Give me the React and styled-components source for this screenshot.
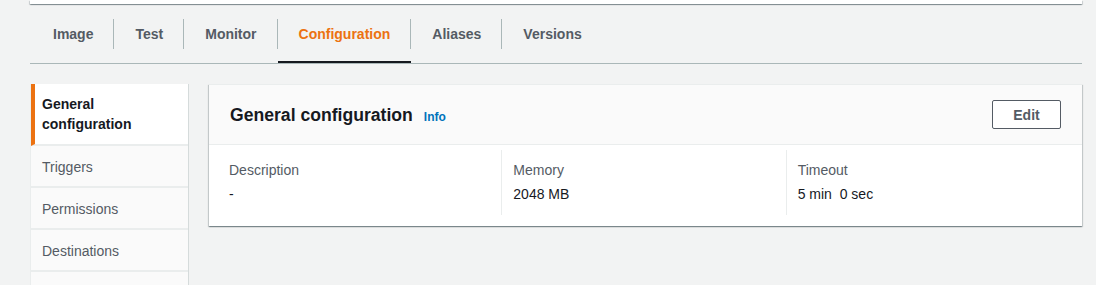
import React from 'react';
import styled, { createGlobalStyle } from 'styled-components';

const GlobalStyle = createGlobalStyle`
  html, body {
    margin: 0;
    padding: 0;
    background: #f2f3f3;
    font-family: "Liberation Sans", Arial, sans-serif;
    color: #16191f;
    -webkit-font-smoothing: antialiased;
  }
`;

const Page = styled.div`
  padding: 0 14px 0 30px;
  height: 285px;
  overflow: hidden;
`;

const TopPanel = styled.div`
  height: 4px;
  background: #ffffff;
  box-shadow: 0 1px 1px 0 rgba(0, 28, 36, 0.3), 1px 1px 1px 0 rgba(0, 28, 36, 0.15),
    -1px 1px 1px 0 rgba(0, 28, 36, 0.15);
`;

const TabList = styled.div`
  display: flex;
  padding-left: 2px;
  border-bottom: 1px solid #aab7b8;
`;

const Tab = styled.div`
  padding: 15px 0 12px;
  border-bottom: 2px solid ${p => (p.$active ? '#16191f' : 'transparent')};
`;

const TabLabel = styled.div`
  padding: 6px 20px 6px 21px;
  line-height: 18px;
  font-size: 14px;
  font-weight: 700;
  color: ${p => (p.$active ? '#ec7211' : '#545b64')};
  border-right: 1px solid ${p => (p.$last ? 'transparent' : '#aab7b8')};
`;

const Content = styled.div`
  display: flex;
  gap: 20px;
  margin-top: 20px;
  align-items: flex-start;
`;

const SideNav = styled.nav`
  width: 157px;
  flex-shrink: 0;
  background: #fafafa;
  border-left: 1px solid #eaeded;
  border-right: 1px solid #d5dbdb;
  min-height: 220px;
`;

const NavItem = styled.div`
  padding: ${p => (p.$active ? '10px' : '11px')} 10px ${p => (p.$active ? '10px' : '9px')}
    ${p => (p.$active ? '7px' : '11px')};
  border-left: ${p => (p.$active ? '4px solid #ec7211' : 'none')};
  background: ${p => (p.$active ? '#ffffff' : '#fafafa')};
  border-bottom: 2px solid #eaeded;
  font-size: 14px;
  line-height: 20px;
  font-weight: ${p => (p.$active ? 700 : 400)};
  color: ${p => (p.$active ? '#16191f' : '#545b64')};
`;

const Card = styled.section`
  flex: 1;
  background: #ffffff;
  border-top: 1px solid #eaeded;
  box-shadow: 0 1px 1px 0 rgba(0, 28, 36, 0.3), 1px 1px 1px 0 rgba(0, 28, 36, 0.15),
    -1px 1px 1px 0 rgba(0, 28, 36, 0.15);
`;

const CardHeader = styled.header`
  display: flex;
  align-items: center;
  justify-content: space-between;
  height: 59px;
  padding: 0 21px;
  background: #fafafa;
  border-bottom: 1px solid #eaeded;
`;

const TitleRow = styled.div`
  display: flex;
  align-items: baseline;
  gap: 11px;
  padding-top: 2px;
`;

const Title = styled.h2`
  margin: 0;
  font-size: 17.6px;
  font-weight: 700;
  color: #16191f;
`;

const InfoLink = styled.a`
  font-size: 12px;
  font-weight: 700;
  color: #0073bb;
  text-decoration: none;
`;

const Button = styled.button`
  height: 29px;
  width: 69px;
  border: 1px solid #545b64;
  border-radius: 2px;
  background: #ffffff;
  font-family: inherit;
  font-size: 14px;
  font-weight: 700;
  color: #545b64;
  cursor: pointer;
`;

const CardBody = styled.div`
  display: grid;
  grid-template-columns: repeat(3, 1fr);
  padding: 5px 12px 11px 8px;
`;

const Column = styled.div`
  padding: 10px 11px 11px;
  border-left: 1px solid ${p => (p.$first ? 'transparent' : '#eaeded')};
  display: flex;
  flex-direction: column;
  gap: 4px;
  font-size: 14px;
  line-height: 20px;
`;

const Label = styled.div`
  color: #545b64;
`;

const Value = styled.div`
  color: #16191f;
  white-space: pre;
`;

const tabs = ['Image', 'Test', 'Monitor', 'Configuration', 'Aliases', 'Versions'];
const navItems = ['General configuration', 'Triggers', 'Permissions', 'Destinations'];
const fields = [
  { label: 'Description', value: '-' },
  { label: 'Memory', value: '2048 MB' },
  { label: 'Timeout', value: '5 min  0 sec' },
];

export default function App() {
  return (
    <Page>
      <GlobalStyle />
      <TopPanel />
      <TabList>
        {tabs.map((t, i) => (
          <Tab key={t} $active={t === 'Configuration'}>
            <TabLabel $active={t === 'Configuration'} $last={i === tabs.length - 1}>
              {t}
            </TabLabel>
          </Tab>
        ))}
      </TabList>
      <Content>
        <SideNav>
          {navItems.map((n, i) => (
            <NavItem key={n} $active={i === 0}>
              {i === 0 ? (
                <>
                  General
                  <br />
                  configuration
                </>
              ) : (
                n
              )}
            </NavItem>
          ))}
        </SideNav>
        <Card>
          <CardHeader>
            <TitleRow>
              <Title>General configuration</Title>
              <InfoLink href="#">Info</InfoLink>
            </TitleRow>
            <Button>Edit</Button>
          </CardHeader>
          <CardBody>
            {fields.map((f, i) => (
              <Column key={f.label} $first={i === 0}>
                <Label>{f.label}</Label>
                <Value>{f.value}</Value>
              </Column>
            ))}
          </CardBody>
        </Card>
      </Content>
    </Page>
  );
}
